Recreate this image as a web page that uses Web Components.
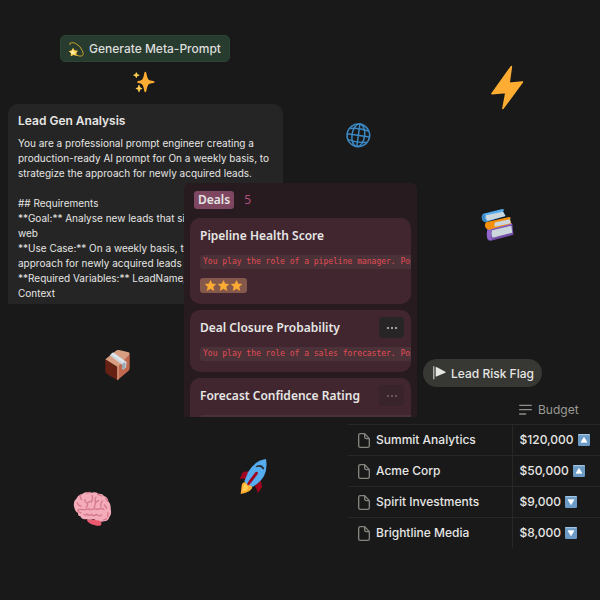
<!DOCTYPE html>
<html lang="en">
<head>
<meta charset="utf-8">
<meta name="viewport" content="width=device-width, initial-scale=1">
<title>Lead Gen Analysis</title>
<style>
  body {
    margin: 0;
    background: #191919;
    color: #e6e6e4;
    font-family: Inter, "Liberation Sans", sans-serif;
  }
</style>
</head>
<body>

<free-canvas>
  <canvas-item style="--x: 60px; --y: 35px"><prompt-button>Generate Meta-Prompt</prompt-button></canvas-item>

  <canvas-item style="--x: 8px; --y: 104px">
    <prompt-card heading="Lead Gen Analysis">
      <p>You are a professional prompt engineer creating a<br>production-ready AI prompt for On a weekly basis, to<br>strategize the approach for newly acquired leads.</p>
      <p>## Requirements<br>**Goal:** Analyse new leads that sign up on the<br>web<br>**Use Case:** On a weekly basis, to strategize the<br>approach for newly acquired leads<br>**Required Variables:** LeadName,<br>Context</p>
    </prompt-card>
  </canvas-item>

  <canvas-item style="--x: 184px; --y: 183px">
    <deals-board name="Deals" count="5">
      <deal-card heading="Pipeline Health Score" prompt="You play the role of a pipeline manager. Pop" rating="3"></deal-card>
      <deal-card heading="Deal Closure Probability" prompt="You play the role of a sales forecaster. Pop" menu="solid"></deal-card>
      <deal-card heading="Forecast Confidence Rating" menu="faded"></deal-card>
    </deals-board>
  </canvas-item>

  <canvas-item style="--x: 423px; --y: 359px"><risk-flag>Lead Risk Flag</risk-flag></canvas-item>

  <canvas-item style="--x: 348px; --y: 395px; --right: 0px"><budget-table></budget-table></canvas-item>

  <canvas-item style="--x: 133px; --y: 71px"><emoji-icon name="sparkles" size="22"></emoji-icon></canvas-item>
  <canvas-item style="--x: 480px; --y: 60px"><emoji-icon name="bolt" size="55"></emoji-icon></canvas-item>
  <canvas-item style="--x: 340px; --y: 115px"><emoji-icon name="globe" size="40"></emoji-icon></canvas-item>
  <canvas-item style="--x: 475px; --y: 200px"><emoji-icon name="books" size="45"></emoji-icon></canvas-item>
  <canvas-item style="--x: 95px; --y: 340px"><emoji-icon name="package" size="45"></emoji-icon></canvas-item>
  <canvas-item style="--x: 230px; --y: 450px"><emoji-icon name="rocket" size="50"></emoji-icon></canvas-item>
  <canvas-item style="--x: 65px; --y: 485px"><emoji-icon name="brain" size="55"></emoji-icon></canvas-item>
</free-canvas>

<script>
/**
 * The drawings, each with its own viewBox.
 */
const icons = {
  sparkles: `<svg viewBox="0 0 66 66">
    <path fill="#ffac33" d="M37 2q2 0 3 4 3 17 7 20 3 3 14 4 4 1 4 3t-4 3q-11 1-14 4-4 4-7 20-1 4-3 4t-3-4q-3-16-7-20-3-3-11-4-4-1-4-3t4-3q8-1 11-4 4-3 7-20 1-4 3-4z"/>
    <path fill="#ffcc4d" d="M10 4q2 0 3 5 1 1 5 2 3 1 0 3-4 1-5 2-1 5-3 5t-3-5q-1-1-5-2-3-2 0-3 4-1 5-2 1-5 3-5zM18 41q2 0 3 7 1 2 5 3 4 2 0 3-4 1-5 3-1 7-3 7t-3-7q-1-2-5-3-4-1 0-3 4-1 5-3 1-7 3-7z"/>
  </svg>`,
  bolt: `<svg viewBox="0 0 165 165">
    <path fill="#ffac33" stroke="#ffac33" stroke-width="5" stroke-linejoin="round" d="M94 20 36 101 78 97 69 145 127 66 87 70z"/>
  </svg>`,
  globe: `<svg viewBox="0 0 120 120">
    <g fill="none" stroke="#3b88c3" stroke-width="4.5" transform="rotate(8 55 61)">
      <circle cx="55" cy="61" r="34"/>
      <ellipse cx="55" cy="61" rx="19" ry="34"/>
      <path d="M55 27v68M21 61h68M27 44q28-7 56 0M27 78q28 7 56 0"/>
    </g>
  </svg>`,
  books: `<svg viewBox="0 0 135 150">
    <path fill="#55acee" d="M25 41 82 27q5 0 5 4l-3 3 8 14-56 17q-9 4-14-5-5-13 3-19z"/>
    <path fill="#ccd6dd" d="m33 46 51-11 7 13-54 14q-7-7-4-16z"/>
    <path fill="#3b88c3" d="M22 44q-4 17 9 23l8-2q-12-7-9-21z"/>
    <path fill="#7450a8" d="m38 87 70-19 4 3 3 30q1 3-2 4l-65 17q-8 2-11-5-4-15 1-30z"/>
    <path fill="#ccd6dd" d="m51 91 58-14 3 21-59 15q-6-10-2-22z"/>
    <path fill="#9266cc" d="m38 87 70-19 3 6-60 14q-6 15-1 32-9 2-12-5-5-14 0-28z"/>
    <path fill="#f4900c" d="m33 67 69-16q5 0 5 4l-2 3 4 13-68 18q-8-1-10-7-3-9 2-15z"/>
    <path fill="#ccd6dd" d="m61 67 44-9 2 12-47 10q-4-7 1-13z"/>
  </svg>`,
  package: `<svg viewBox="0 0 135 150">
    <path fill="#662113" d="M31 58 67 80v41L35 101q-4-2-4-7z"/>
    <path fill="#c1694f" d="m67 80 37-41v46q0 5-4 8l-33 28z"/>
    <path fill="#d99e82" d="M31 58 65 31q3-2 7-1l29 7q5 3 1 7L68 81z"/>
    <path fill="#d99e82" d="m67 80 4-4v42l-4 3z"/>
    <path fill="#ccd6dd" d="m44 46 11-9 40 29-2 17q-5 0-6 6l-6-3V74z"/>
    <path fill="#e1e8ed" d="m48 42 5-4 40 29-3 5z"/>
    <path fill="#99aab5" d="m81 73 10-8v17l-5 6-5-3z"/>
  </svg>`,
  rocket: `<svg viewBox="0 0 150 150">
    <path fill="#a0041e" d="M57 64 41 65q-3 1-5 6l-7 17q9-5 18 1zM92 91l4 18q1 5-4 8l-9 13q-2-15-9-21z"/>
    <path fill="#ffac33" d="M49 96q-13-1-14 11l-3 25q14-1 25-8 13-8 9-18z"/>
    <path fill="#ffcc4d" d="M48 101q-8 3-9 10l-2 13q12 0 19-10z"/>
    <path fill="#55acee" d="M108 27Q74 31 54 67L43 94q9 13 26 16 22-13 33-32 11-23 6-51z"/>
    <path fill="#292f33" d="M77 49q17-11 26 6l-3 4q-9-13-20-7z"/>
    <path fill="#a0041e" d="M83 66q-6-2-10 5L59 89q-10 14-6 16 4 3 14-12l14-18q4-5 2-9z"/>
  </svg>`,
  brain: `<svg viewBox="0 0 165 165">
    <path fill="#ea596e" d="M64 103q7 15 26 18 12 4 19-2 2-10-4-14z"/>
    <path fill="#f4abba" d="M27 64q-3-15 8-24 3-9 15-12Q63 18 79 23q13-3 21 3 13-1 17 7 12 4 13 16 9 10 7 23 4 15-4 25-3 12-16 12-9 4-16-3-9 1-15-4-13 5-21 0-14 4-19-8-8-1-7-10-9-3-12-20z"/>
    <g fill="none" stroke="#d57a8d" stroke-width="4" stroke-linecap="round" stroke-linejoin="round">
      <path d="M39 78q-2-5 5-5l17 1q8-4 15 0 14-4 22-1 11-5 19 0M39 78q4 6 9 5M37 54q3 9 11 9M49 44q-5-8-3-14M64 67q5-4 3-13-9-3-7-10M67 54l8-5M81 31q4 12-2 20M88 68l4-16q-4-8 1-16M92 52l9-5M108 65q-3-10 4-17M57 88q4 5 9-1 6 8 13 1 8 8 16 0 6 8 15 2M98 28l12 5M122 40l6 9M118 60l7 9M129 83l-1 12M116 105l9-4M66 24l9-2"/>
    </g>
  </svg>`,
  dizzy: `<svg viewBox="0 0 48 48">
    <g fill="none" stroke="#c9a52c" stroke-width="3">
      <path d="M5 12Q8 1 22 7q15 7 21 22 6 15-3 16-7 1-13-2"/>
      <path stroke="#8f7a2c" stroke-width="2" d="M3 7q10-8 25 4"/>
    </g>
    <path fill="#ffcc4d" d="m15 20 5 8 10 1-5 7 2 9-10-3-9 4 1-9-7-6 9-3z"/>
    <path fill="#fff0a8" d="m14 26 3 6 6 1-4 3 1 4-6-2-5 2 1-5-4-3 6-1z"/>
  </svg>`,
  star: `<svg viewBox="0 0 36 36">
    <path fill="#ffac33" stroke="#ffac33" stroke-width="2" stroke-linejoin="round" d="m18 2 5 11 12 1-9 8 3 12-11-6-11 6 3-12-9-8 12-1z"/>
  </svg>`,
  flag: `<svg viewBox="0 0 39 42">
    <path fill="#e6e6e4" d="M1 1h3v39H1zM8 4q1-2 4 0l25 13q2 2 0 3L12 31q-4 2-4-1z"/>
  </svg>`,
  page: `<svg viewBox="0 0 36 45">
    <path fill="none" stroke="#85847e" stroke-width="4" stroke-linejoin="round" d="M7 2h13l14 15v21q0 5-5 5H7q-5 0-5-5V7q0-5 5-5zM20 2v10q0 5 5 5h9"/>
  </svg>`,
  lines: `<svg viewBox="0 0 39 33">
    <path fill="none" stroke="#8f8e88" stroke-width="4" stroke-linecap="round" d="M2 4h35M2 17h35M2 30h18"/>
  </svg>`,
  up: `<svg viewBox="0 0 36 36">
    <rect width="36" height="36" rx="4" fill="#6b9ac4"/><path fill="#a0c5e3" d="M4 0h28q4 0 4 4H0q0-4 4-4z"/>
    <path fill="#fff" stroke="#fff" stroke-width="2" stroke-linejoin="round" d="m18 10 9 15H9z"/>
  </svg>`,
  down: `<svg viewBox="0 0 36 36">
    <rect width="36" height="36" rx="4" fill="#6b9ac4"/><path fill="#a0c5e3" d="M4 0h28q4 0 4 4H0q0-4 4-4z"/>
    <path fill="#fff" stroke="#fff" stroke-width="2" stroke-linejoin="round" d="m18 26 9-15H9z"/>
  </svg>`
}

/**
 * Base class, attaches the shadow root.
 */
class BaseElement extends HTMLElement {
  constructor () {
    super()
    this.attachShadow({ mode: 'open' })
  }

  connectedCallback () {
    this.shadowRoot.innerHTML = this.render()
  }
}

customElements.define('emoji-icon', class extends BaseElement {
  render () {
    return `
<style>
  :host { display: block; flex: none; width: ${this.getAttribute('size')}px; }
  svg { display: block; width: 100%; height: auto; }
</style>
${icons[this.getAttribute('name')]}`
  }
})

customElements.define('free-canvas', class extends BaseElement {
  render () {
    return `
<style>
  :host { display: block; position: relative; min-height: 100vh; overflow: hidden; }
</style>
<slot></slot>`
  }
})

// One thing placed freely on the canvas.
customElements.define('canvas-item', class extends BaseElement {
  render () {
    return `
<style>
  :host { display: block; position: absolute; left: var(--x); top: var(--y); right: var(--right, auto); }
</style>
<slot></slot>`
  }
})

customElements.define('prompt-button', class extends BaseElement {
  render () {
    return `
<style>
  :host { display: block; }
  button {
    display: flex;
    align-items: center;
    gap: 5px;
    height: 27px;
    padding: 0 8px 0 7px;
    border: 1px solid #2b4435;
    border-radius: 5px;
    background: #273b2f;
    color: #dededc;
    font: 500 12px Inter, sans-serif;
    white-space: nowrap;
  }
</style>
<button type="button"><emoji-icon name="dizzy" size="16"></emoji-icon><slot></slot></button>`
  }
})

customElements.define('prompt-card', class extends BaseElement {
  render () {
    return `
<style>
  :host {
    display: block;
    box-sizing: border-box;
    width: 275px;
    height: 200px;
    padding: 8px 10px 0;
    overflow: hidden;
    border-radius: 10px 10px 0 0;
    background: #252525;
    white-space: nowrap;
  }
  h2 { margin: 0 0 6px; font-size: 12px; line-height: 18px; font-weight: 600; }
  ::slotted(p) { margin: 0 0 15px; font-size: 10px; line-height: 15px; }
</style>
<h2>${this.getAttribute('heading')}</h2>
<slot></slot>`
  }
})

customElements.define('deals-board', class extends BaseElement {
  render () {
    return `
<style>
  :host {
    display: flex;
    flex-direction: column;
    gap: 6px;
    box-sizing: border-box;
    width: 233px;
    height: 234px;
    padding: 8px 6px 0;
    overflow: hidden;
    border-radius: 6px 6px 0 0;
    background: #271b1f;
    font-family: "Noto Sans", sans-serif;
  }
  header { display: flex; align-items: center; gap: 10px; padding: 0 4px 3px; font-size: 12px; line-height: 18px; }
  h2 { margin: 0; padding: 0 4px; border-radius: 3px; background: #7f4661; font-size: 12px; font-weight: 600; }
  span { color: #b04f7c; }
</style>
<header><h2>${this.getAttribute('name')}</h2><span>${this.getAttribute('count')}</span></header>
<slot></slot>`
  }
})

customElements.define('deal-card', class extends BaseElement {
  render () {
    const heading = this.getAttribute('heading')
    const prompt = this.getAttribute('prompt')
    const menu = this.getAttribute('menu')
    const rating = Number(this.getAttribute('rating'))

    return `
<style>
  :host {
    display: block;
    flex: none;
    padding: 7px 0 11px 10px;
    overflow: hidden;
    border-radius: 10px;
    background: #412630;
    white-space: nowrap;
  }
  header { display: flex; justify-content: space-between; height: 21px; padding-right: 7px; }
  h3 { margin: 0; font-size: 12px; line-height: 21px; font-weight: 600; }
  button {
    display: flex;
    align-items: center;
    justify-content: center;
    gap: 2px;
    width: 25px;
    height: 21px;
    padding: 0;
    border: 0;
    border-radius: 4px;
    background: #272526;
    color: #c8c8c6;
  }
  button.faded { background: #39242b; color: #79636b; }
  button i { width: 2px; height: 2px; border-radius: 1px; background: currentColor; }
  code {
    display: block;
    margin-top: 9px;
    padding-left: 3px;
    border-radius: 3px 0 0 3px;
    background: #4b3138;
    color: #e24d54;
    font: 8px/14px "DejaVu Sans Mono", monospace;
  }
  .rating { display: inline-flex; gap: 2px; margin-top: 9px; padding: 2px 5px; border-radius: 3px; background: #85584c; vertical-align: top; }
</style>
<header>
  <h3>${heading}</h3>
  ${menu ? `<button type="button" class="${menu}" aria-label="More"><i></i><i></i><i></i></button>` : ''}
</header>
<code>${prompt || '&nbsp;'}</code>
${rating ? `<div class="rating">${'<emoji-icon name="star" size="11"></emoji-icon>'.repeat(rating)}</div>` : ''}`
  }
})

customElements.define('risk-flag', class extends BaseElement {
  render () {
    return `
<style>
  :host { display: block; }
  button {
    display: flex;
    align-items: center;
    gap: 5px;
    height: 28px;
    padding: 0 8px 0 10px;
    border: 0;
    border-radius: 14px;
    background: #373833;
    color: #e6e6e4;
    font: 500 12px Inter, sans-serif;
    white-space: nowrap;
  }
</style>
<button type="button"><emoji-icon name="flag" size="13"></emoji-icon><slot></slot></button>`
  }
})

customElements.define('budget-table', class extends BaseElement {
  render () {
    const rows = [
      ['Summit Analytics', '$120,000', 'up'],
      ['Acme Corp', '$50,000', 'up'],
      ['Spirit Investments', '$9,000', 'down'],
      ['Brightline Media', '$8,000', 'down']
    ]

    return `
<style>
  :host { display: block; }
  table { width: 100%; border-collapse: collapse; font-size: 12px; line-height: 16px; white-space: nowrap; }
  th, td { box-sizing: border-box; height: 31px; padding: 1px 0 0 7px; text-align: left; font-weight: 500; border-top: 1px solid #282828; }
  thead th, thead td { height: 29px; border: 0; color: #9b9a94; font-weight: 400; }
  tbody th { width: 164px; padding-left: 10px; border-right: 1px solid #282828; }
  div { display: flex; align-items: center; gap: 4px; }
  .wide { gap: 6px; }
</style>
<table>
  <thead>
    <tr><td></td><th scope="col"><div class="wide"><emoji-icon name="lines" size="13"></emoji-icon>Budget</div></th></tr>
  </thead>
  <tbody>
    ${rows.map(([name, budget, trend]) => `
    <tr>
      <th scope="row"><div class="wide"><emoji-icon name="page" size="12"></emoji-icon>${name}</div></th>
      <td><div>${budget}<emoji-icon name="${trend}" size="12"></emoji-icon></div></td>
    </tr>`).join('')}
  </tbody>
</table>`
  }
})
</script>
</body>
</html>
